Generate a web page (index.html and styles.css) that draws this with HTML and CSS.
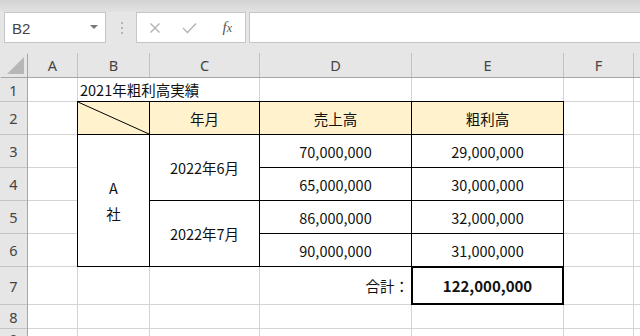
FILE: index.html
```html
<!DOCTYPE html>
<html lang="ja">
  <head>
    <meta charset="UTF-8" />
    <title>2021年粗利高実績</title>
    <link rel="stylesheet" href="styles.css">
  </head>
  <body>
    <div class="window">
      <div class="top-edge"></div>

      <!-- Name box + formula bar -->
      <div class="formula-bar">
        <div class="name-box">
          <span class="name-ref">B2</span>
          <span class="name-arrow"></span>
        </div>
        <div class="grip">
          <svg width="4" height="12" viewBox="0 0 4 12">
            <rect x="1" y="0" width="2" height="2" />
            <rect x="1" y="5" width="2" height="2" />
            <rect x="1" y="10" width="2" height="2" />
          </svg>
        </div>
        <div class="fx-buttons">
          <span class="fx-btn">
            <svg width="12" height="12" viewBox="0 0 12 12">
              <path d="M1.5 1.5 L10.5 10.5 M10.5 1.5 L1.5 10.5" />
            </svg>
          </span>
          <span class="fx-btn">
            <svg width="15" height="12" viewBox="0 0 15 12">
              <path d="M1 6 L5.5 10.5 L14 1.5" />
            </svg>
          </span>
          <span class="fx-btn fx">f<span class="fx-x">x</span></span>
        </div>
        <div class="formula-input"></div>
      </div>

      <!-- Worksheet -->
      <div class="sheet">
        <!-- column headers -->
        <div class="corner"></div>
        <div class="ch">A</div>
        <div class="ch">B</div>
        <div class="ch">C</div>
        <div class="ch">D</div>
        <div class="ch">E</div>
        <div class="ch">F</div>
        <div class="ch"></div>

        <!-- row 1 -->
        <div class="rh">1</div>
        <div class="cell"></div>
        <div class="cell title">2021年粗利高実績</div>
        <div class="cell"></div>
        <div class="cell"></div>
        <div class="cell"></div>
        <div class="cell"></div>

        <!-- row 2 -->
        <div class="rh">2</div>
        <div class="cell"></div>
        <div class="cell tb hd diag">
          <svg viewBox="0 0 100 100" preserveAspectRatio="none">
            <line x1="0" y1="0" x2="100" y2="100" vector-effect="non-scaling-stroke" />
          </svg>
        </div>
        <div class="cell tb hd">年月</div>
        <div class="cell tb hd">売上高</div>
        <div class="cell tb hd">粗利高</div>
        <div class="cell"></div>
        <div class="cell"></div>

        <!-- row 3 -->
        <div class="rh">3</div>
        <div class="cell"></div>
        <div class="cell tb company">A<br>社</div>
        <div class="cell tb span2">2022年6月</div>
        <div class="cell tb">70,000,000</div>
        <div class="cell tb">29,000,000</div>
        <div class="cell"></div>
        <div class="cell"></div>

        <!-- row 4 -->
        <div class="rh">4</div>
        <div class="cell"></div>
        <div class="cell tb">65,000,000</div>
        <div class="cell tb">30,000,000</div>
        <div class="cell"></div>
        <div class="cell"></div>

        <!-- row 5 -->
        <div class="rh">5</div>
        <div class="cell"></div>
        <div class="cell tb span2">2022年7月</div>
        <div class="cell tb">86,000,000</div>
        <div class="cell tb">32,000,000</div>
        <div class="cell"></div>
        <div class="cell"></div>

        <!-- row 6 -->
        <div class="rh">6</div>
        <div class="cell"></div>
        <div class="cell tb">90,000,000</div>
        <div class="cell tb">31,000,000</div>
        <div class="cell"></div>
        <div class="cell"></div>

        <!-- row 7 -->
        <div class="rh">7</div>
        <div class="cell"></div>
        <div class="cell"></div>
        <div class="cell"></div>
        <div class="cell label">合計：</div>
        <div class="cell total">122,000,000</div>
        <div class="cell"></div>
        <div class="cell"></div>

        <!-- row 8 -->
        <div class="rh">8</div>
        <div class="cell"></div>
        <div class="cell"></div>
        <div class="cell"></div>
        <div class="cell"></div>
        <div class="cell"></div>
        <div class="cell"></div>
        <div class="cell"></div>

        <!-- row 9 -->
        <div class="rh">9</div>
        <div class="cell"></div>
        <div class="cell"></div>
        <div class="cell"></div>
        <div class="cell"></div>
        <div class="cell"></div>
        <div class="cell"></div>
        <div class="cell"></div>
      </div>
    </div>
  </body>
</html>
```

FILE: styles.css
```css
body {
  margin: 0;
  padding: 0;
  background-color: #e6e6e6;
  font-family: "Noto Sans", "Noto Sans CJK JP", sans-serif;
  overflow: hidden;
}

.window {
  width: 640px;
  height: 336px;
  display: flex;
  flex-direction: column;
}

.top-edge {
  height: 12px;
  background: linear-gradient(#d3d3d3, #e2e2e2);
}

/* ---------- formula bar ---------- */

.formula-bar {
  display: flex;
  height: 31px;
  margin-bottom: 10px;
  background-color: #e6e6e6;
}

.name-box {
  margin-left: 4px;
  width: 102px;
  box-sizing: border-box;
  border: 1px solid #c6c6c6;
  background-color: #fff;
  display: flex;
  align-items: center;
  justify-content: space-between;
  padding: 0 7px 0 7px;
}

.name-ref {
  font-family: "Liberation Sans", sans-serif;
  font-size: 15px;
  color: #444;
  padding-top: 2px;
}

.name-arrow {
  width: 0;
  height: 0;
  border-left: 4px solid transparent;
  border-right: 4px solid transparent;
  border-top: 4px solid #777;
  margin-bottom: 1px;
}

.grip {
  width: 30px;
  display: flex;
  align-items: center;
  justify-content: center;
}

.grip svg {
  fill: #b5b5b5;
  margin-left: 1px;
}

.fx-buttons {
  width: 110px;
  box-sizing: border-box;
  border: 1px solid #c6c6c6;
  background-color: #fff;
  display: flex;
  align-items: center;
}

.fx-btn {
  width: 36px;
  display: flex;
  align-items: center;
  justify-content: center;
}

.fx-btn svg {
  fill: none;
  stroke: #b3b3b3;
  stroke-width: 1.4;
}

.fx {
  font-family: "Liberation Serif", serif;
  font-style: italic;
  font-size: 15px;
  color: #555;
  padding-left: 2px;
}

.fx-x {
  font-size: 12px;
  position: relative;
  top: 1px;
}

.formula-input {
  flex: 1;
  margin-left: 3px;
  border: 1px solid #c6c6c6;
  border-right: none;
  background-color: #fff;
}

/* ---------- worksheet grid ---------- */

.sheet {
  flex: 1;
  display: grid;
  grid-template-columns: 27px 49px 71px 109px 151px 151px 69px 1fr;
  grid-template-rows: 24px 23px repeat(5, 32px) 37px 23px 1fr;
  gap: 1px;
  background-color: #d4d4d4;
  overflow: hidden;
}

.corner {
  background-color: #e6e6e6;
  box-shadow: 1px 1px 0 #a6a6a6;
  position: relative;
}

.corner::after {
  content: "";
  position: absolute;
  left: 7px;
  top: 4px;
  width: 17px;
  height: 17px;
  background-color: #b7b7b7;
  clip-path: polygon(100% 0, 100% 100%, 0 100%);
}

.ch,
.rh {
  background-color: #e6e6e6;
  color: #444;
  font-size: 14.5px;
  display: flex;
  align-items: center;
  justify-content: center;
}

.ch {
  box-shadow: 0 1px 0 #a6a6a6, 1px 0 0 #c2c2c2, 1px 1px 0 #a6a6a6;
}

.rh {
  box-shadow: 1px 0 0 #a6a6a6, 0 1px 0 #c4c4c4, 1px 1px 0 #a6a6a6;
}

.cell {
  background-color: #fff;
  font-family: "Noto Sans CJK JP", sans-serif;
  font-size: 14.5px;
  color: #111;
  display: flex;
  align-items: center;
  justify-content: center;
  white-space: nowrap;
}

/* bordered table */
.tb {
  outline: 1px solid #000;
}

.hd {
  background-color: #fff2cc;
}

.title {
  grid-column: span 2;
  justify-content: flex-start;
  padding-left: 2px;
}

.diag svg {
  width: 100%;
  height: 100%;
  display: block;
}

.diag line {
  stroke: #000;
  stroke-width: 1;
}

.company {
  grid-row: span 4;
  text-align: center;
  line-height: 26px;
}

.span2 {
  grid-row: span 2;
}

.label {
  justify-content: flex-end;
  padding-right: 2px;
}

.total {
  font-weight: bold;
  font-size: 15px;
  outline: 2px solid #000;
  outline-offset: -1px;
}
```
